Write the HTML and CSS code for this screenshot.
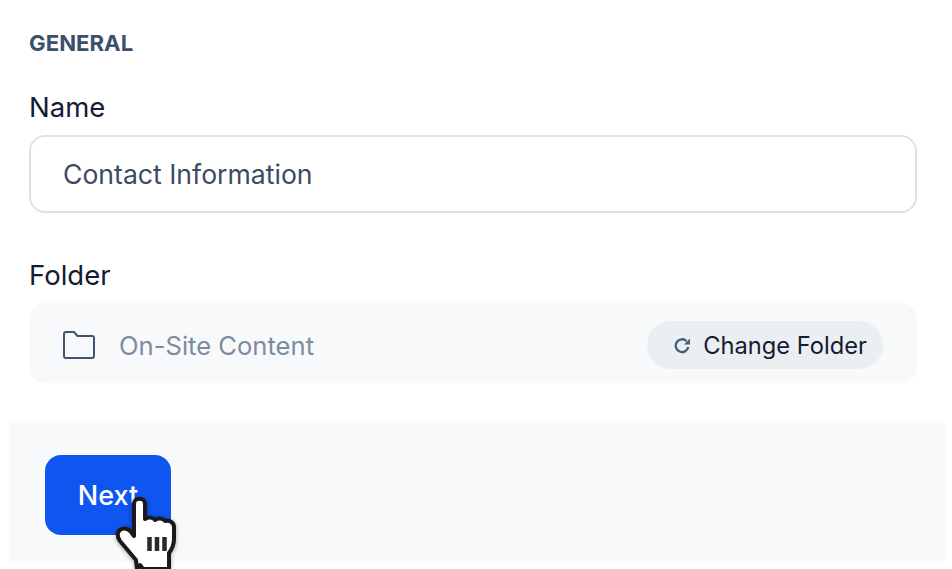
FILE: index.html
```html
<!DOCTYPE html>
<html lang="en">
<head>
    <meta charset="UTF-8">
    <meta name="viewport" content="width=device-width, initial-scale=1.0">
    <title>General</title>
    <link rel="stylesheet" href="styles.css">
</head>
<body>
    <div class="form">
        <h2 class="section-title">GENERAL</h2>

        <label class="field-label" for="name">Name</label>
        <input class="text-input" id="name" type="text" value="Contact Information">

        <div class="field-label folder-label">Folder</div>
        <div class="folder-box">
            <svg class="folder-icon" viewBox="0 0 32 28" fill="none">
                <path d="M1 3a2 2 0 0 1 2-2h8l3.500 4H29a2 2 0 0 1 2 2v18a2 2 0 0 1-2 2H3a2 2 0 0 1-2-2z" stroke="#3f5672" stroke-width="2" stroke-linejoin="round"/>
            </svg>
            <span class="folder-name">On-Site Content</span>
            <button class="change-btn" type="button">
                <svg class="refresh-icon" viewBox="0 0 16 16" fill="none">
                    <path d="M13.500 9.500A6 6 0 1 1 11.800 3.800" stroke="#3f5f7d" stroke-width="2.200"/>
                    <path d="M9.500 7H15V1.500z" fill="#3f5f7d"/>
                </svg>
                Change Folder
            </button>
        </div>
    </div>

    <div class="footer">
        <div class="next-wrap">
            <button class="next-btn" type="button">Next</button>
            <svg class="cursor" viewBox="0 0 65 74">
                <path d="M19 9c0-7 11-7 11 0v15c3-2 8-2 10 1 3-2 8-2 10 1 4-1 9 1 9 6v12c0 6-2 10-5 14v16H28l-3-4-3 4L21 65 5 46c-3-4-3-9 0-11 4-3 9-1 11 2l3 4z" fill="#fff" stroke="#1a1a1a" stroke-width="4" stroke-linejoin="round"/>
                <path d="M34.500 42v14M42 42v14M49.500 42v14" stroke="#2a2a2a" stroke-width="4.500"/>
            </svg>
        </div>
    </div>
</body>
</html>
```

FILE: styles.css
```css
* {
    box-sizing: border-box;
    margin: 0;
    padding: 0;
}

body {
    font-family: Inter, 'Noto Sans', sans-serif;
    background-color: white;
    color: #151b33;
    height: 569px;
    overflow: hidden;
}

.form {
    width: 917px;
    padding: 31px 0 0 29px;
}

.section-title {
    font-size: 22.200px;
    line-height: 24px;
    font-weight: 700;
    color: #3b5069;
    margin-bottom: 36px;
}

.field-label {
    display: block;
    font-size: 27.500px;
    line-height: 32px;
    margin-bottom: 12px;
}

.text-input {
    display: block;
    width: 100%;
    height: 78px;
    padding: 0 32px;
    border: 2px solid #d9e4ea;
    border-radius: 16px;
    font-family: inherit;
    font-size: 26.600px;
    color: #3d4a63;
    background: white;
}

.folder-label {
    margin-top: 46px;
    margin-bottom: 12px;
}

.folder-box {
    display: flex;
    align-items: center;
    height: 80px;
    padding: 4px 34px 0;
    background-color: #f7f9fb;
    border-radius: 16px;
}

.folder-icon {
    width: 32px;
    height: 28px;
    margin-right: 24px;
}

.folder-name {
    flex: 1;
    font-size: 25.600px;
    color: #7c8ca0;
}

.change-btn {
    display: flex;
    align-items: center;
    gap: 12px;
    height: 48px;
    padding: 0 16px 0 27px;
    border: none;
    border-radius: 24px;
    background-color: #eaeff2;
    color: #151b33;
    font-family: inherit;
    font-size: 23.700px;
}

.refresh-icon {
    width: 17px;
    height: 17px;
}

.footer {
    width: 936px;
    height: 138px;
    margin: 40px 0 0 9px;
    padding: 32px 36px;
    background-color: #f7f9fb;
}

.next-wrap {
    position: relative;
    width: 126px;
}

.next-btn {
    display: block;
    width: 126px;
    height: 80px;
    border: none;
    border-radius: 16px;
    background-color: #0f55f0;
    color: white;
    font-family: inherit;
    font-size: 27px;
    font-weight: 500;
}

.cursor {
    position: absolute;
    left: 70px;
    top: 40px;
    width: 65px;
    height: 74px;
    filter: drop-shadow(0 1px 2px rgba(0, 0, 0, 0.35));
}
```
